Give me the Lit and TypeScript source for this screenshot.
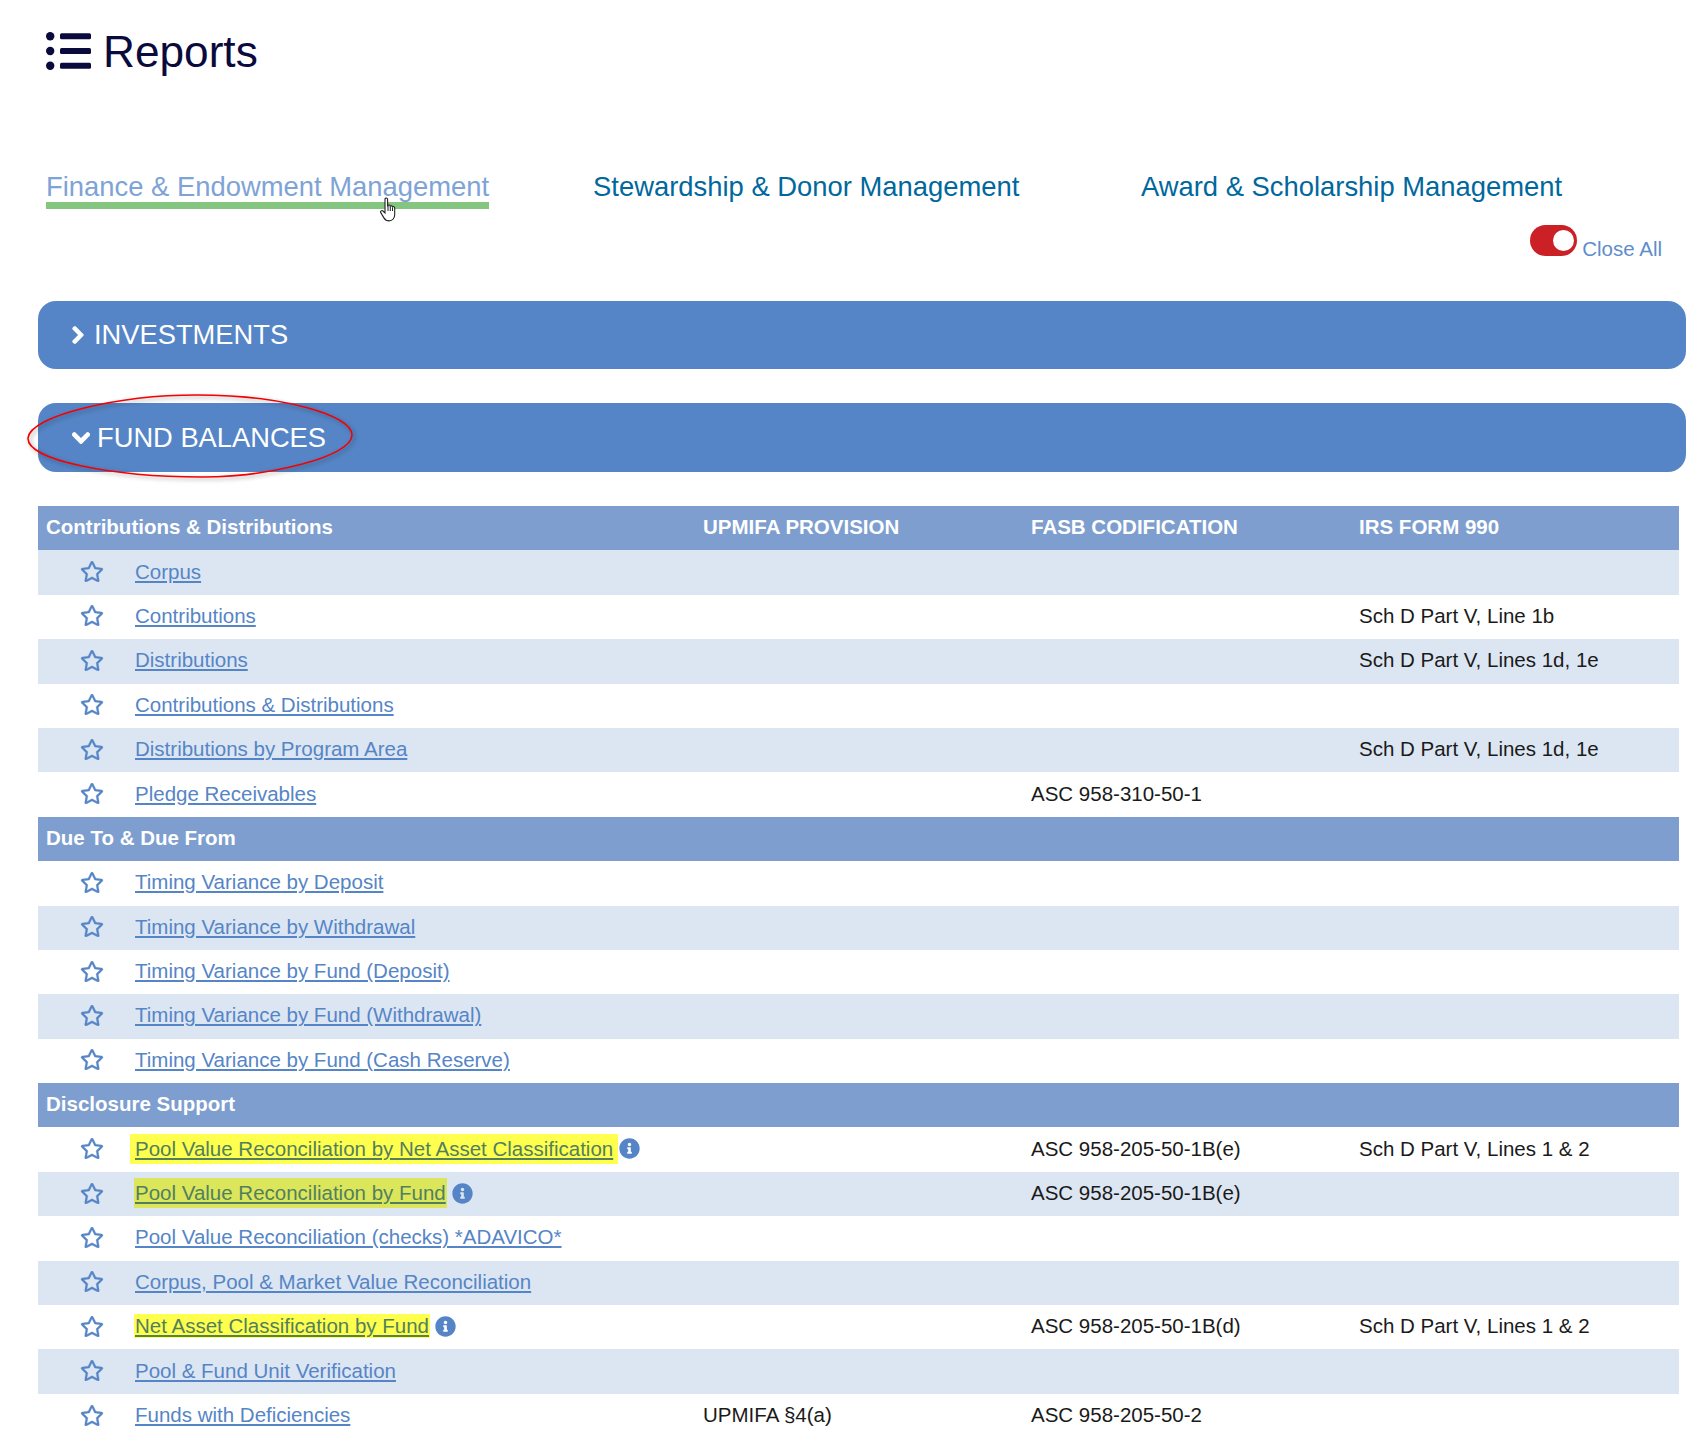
import { LitElement, html, css, svg } from "lit";
import { customElement } from "lit/decorators.js";

type Row = { kind: "head"; cells: string[] } | { kind: "row"; name: string; hl?: number; info?: boolean; a?: string; b?: string; c?: string; alt?: boolean };

const ROWS: Row[] = [
  { kind: "head", cells: ["Contributions & Distributions", "UPMIFA PROVISION", "FASB CODIFICATION", "IRS FORM 990"] },
  { kind: "row", name: "Corpus", alt: true },
  { kind: "row", name: "Contributions", c: "Sch D Part V, Line 1b" },
  { kind: "row", name: "Distributions", c: "Sch D Part V, Lines 1d, 1e", alt: true },
  { kind: "row", name: "Contributions & Distributions" },
  { kind: "row", name: "Distributions by Program Area", c: "Sch D Part V, Lines 1d, 1e", alt: true },
  { kind: "row", name: "Pledge Receivables", b: "ASC 958-310-50-1" },
  { kind: "head", cells: ["Due To & Due From", "", "", ""] },
  { kind: "row", name: "Timing Variance by Deposit" },
  { kind: "row", name: "Timing Variance by Withdrawal", alt: true },
  { kind: "row", name: "Timing Variance by Fund (Deposit)" },
  { kind: "row", name: "Timing Variance by Fund (Withdrawal)", alt: true },
  { kind: "row", name: "Timing Variance by Fund (Cash Reserve)" },
  { kind: "head", cells: ["Disclosure Support", "", "", ""] },
  { kind: "row", name: "Pool Value Reconciliation by Net Asset Classification", hl: 1, info: true, b: "ASC 958-205-50-1B(e)", c: "Sch D Part V, Lines 1 & 2" },
  { kind: "row", name: "Pool Value Reconciliation by Fund", hl: 2, info: true, b: "ASC 958-205-50-1B(e)", alt: true },
  { kind: "row", name: "Pool Value Reconciliation (checks) *ADAVICO*" },
  { kind: "row", name: "Corpus, Pool & Market Value Reconciliation", alt: true },
  { kind: "row", name: "Net Asset Classification by Fund", hl: 3, info: true, b: "ASC 958-205-50-1B(d)", c: "Sch D Part V, Lines 1 & 2" },
  { kind: "row", name: "Pool & Fund Unit Verification", alt: true },
  { kind: "row", name: "Funds with Deficiencies", a: "UPMIFA §4(a)", b: "ASC 958-205-50-2" },
];

const star = svg`<path d="M528.1 171.5L382 150.2 316.7 17.8c-11.7-23.6-45.6-23.9-57.4 0L194 150.2 47.9 171.5c-26.2 3.8-36.7 36.1-17.7 54.6l105.7 103-25 145.5c-4.5 26.3 23.2 46 46.4 33.7L288 439.6l130.7 68.7c23.2 12.2 50.9-7.4 46.4-33.7l-25-145.5 105.7-103c19-18.5 8.5-50.8-17.7-54.6zM388.6 312.3l23.7 138.4L288 385.4l-124.3 65.3 23.7-138.4-100.6-98 139-20.2 62.2-126 62.2 126 139 20.2-100.6 98z"/>`;
const info = svg`<path d="M256 8C119 8 8 119 8 256s111 248 248 248 248-111 248-248S393 8 256 8zm0 110c23.196 0 42 18.804 42 42s-18.804 42-42 42-42-18.804-42-42 18.804-42 42-42zm56 254c0 6.627-5.373 12-12 12h-88c-6.627 0-12-5.373-12-12v-24c0-6.627 5.373-12 12-12h12v-64h-12c-6.627 0-12-5.373-12-12v-24c0-6.627 5.373-12 12-12h64c6.627 0 12 5.373 12 12v100h12c6.627 0 12 5.373 12 12v24z"/>`;

@customElement("app-root")
export class AppRoot extends LitElement {
  static styles = css`
    :host {
      display: block;
      position: relative;
      width: 1686px;
      height: 1436px;
      overflow: hidden;
      background: #fff;
      font-family: "Liberation Sans", Arial, sans-serif;
      font-size: 20.5px;
      color: #1a1a1a;
    }
    .title {
      display: flex;
      align-items: center;
      gap: 12px;
      margin: 0;
      padding: 26px 0 0 46px;
      height: 52px;
      font-size: 44.2px;
      font-weight: 400;
      line-height: 52px;
      color: #0a0a3c;
    }
    .title svg { width: 45px; height: 38px; fill: #0a0a3c; margin-top: -2px; }
    .tabs {
      display: flex;
      padding: 94px 0 0 46px;
      font-size: 27.4px;
      line-height: 29px;
    }
    .tab { color: #00689d; text-decoration: none; padding-bottom: 1px; border-bottom: 7px solid transparent; }
    .tab.active { color: #7ea3d6; border-bottom-color: #84c680; }
    .tab:nth-child(2) { margin-left: 104px; }
    .tab:nth-child(3) { margin-left: 121.5px; }
    .tools {
      display: flex;
      justify-content: flex-end;
      align-items: flex-start;
      gap: 5px;
      padding: 16px 24px 0 0;
      height: 76px;
    }
    .toggle {
      position: relative;
      width: 47px;
      height: 31px;
      border-radius: 16px;
      background: #cc2027;
    }
    .toggle::after {
      content: "";
      position: absolute;
      right: 3px;
      top: 5px;
      width: 21px;
      height: 21px;
      border-radius: 50%;
      background: #fff;
    }
    .close { color: #5f8dcc; margin-top: 12px; line-height: 24px; }
    .bar {
      display: flex;
      align-items: center;
      margin-left: 38px;
      height: 68px;
      border-radius: 18px;
      background: #5585c6;
      color: #fff;
      font-size: 27.3px;
      padding-left: 34px;
    }
    .bar svg { fill: #fff; stroke: #fff; stroke-width: 36; }
    .bar.one { gap: 10px; }
    .bar.one svg { width: 12px; height: 20px; }
    .bar.two { margin-top: 34px; height: 69px; gap: 7px; }
    .bar.two svg { width: 18px; height: 20px; }
    .grid { margin: 34px 0 0 38px; width: 1641px; }
    .tr {
      display: grid;
      grid-template-columns: 657px 328px 328px 328px;
      height: 44.4px;
      padding-bottom: 2px;
      align-items: center;
      box-sizing: border-box;
    }
    .tr.head { background: #7d9ecf; color: #fff; font-weight: 700; }
    .tr.alt { background: #dce6f2; }
    .cell { padding-left: 8px; white-space: nowrap; }
    .name { display: flex; align-items: center; padding-left: 42px; }
    .star { width: 24px; height: 21px; fill: #5585c6; stroke: #5585c6; stroke-width: 8; flex: none; margin-right: 31px; }
    .name a { color: #5585c6; text-decoration: underline; }
    .hl1, .hl2, .hl3 { background: #ffff4d; }
    .alt .hl2 { background: #dbe65b; }
    .hl1 { padding: 3px 5px; margin-left: -5px; }
    .hl2 { padding: 3px 1px; margin-left: -1px; }
    .hl3 { padding: 0 1px; margin-left: -1px; }
    .hl1 a, .hl2 a, .hl3 a { color: #52805f; }
    .info { width: 21px; height: 21px; fill: #5585c6; flex: none; margin-left: 5px; }
    .hl1 + .info { margin-left: 1px; }
    .ellipse {
      position: absolute;
      left: 27px;
      top: 394px;
      width: 326px;
      height: 84px;
      overflow: visible;
      fill: none;
      stroke: #f50000;
      stroke-width: 1.6;
      filter: drop-shadow(2px 2px 2px rgba(0, 0, 0, 0.35));
    }
    .cursor { position: absolute; left: 380px; top: 197px; width: 18px; height: 26px; }
  `;

  private row(r: Row) {
    if (r.kind === "head") {
      return html`<div class="tr head">${r.cells.map((c) => html`<div class="cell">${c}</div>`)}</div>`;
    }
    const link = html`<a href="#">${r.name}</a>`;
    return html`<div class="tr ${r.alt ? "alt" : ""}">
      <div class="cell name">
        <svg class="star" viewBox="0 0 576 512">${star}</svg>
        ${r.hl ? html`<span class="hl${r.hl}">${link}</span>` : link}
        ${r.info ? html`<svg class="info" viewBox="0 0 512 512">${info}</svg>` : ""}
      </div>
      <div class="cell">${r.a ?? ""}</div>
      <div class="cell">${r.b ?? ""}</div>
      <div class="cell">${r.c ?? ""}</div>
    </div>`;
  }

  render() {
    return html`
      <h1 class="title">
        <svg viewBox="0 0 45 38">
          <circle cx="4.2" cy="4.2" r="4.2" /><circle cx="4.2" cy="19" r="4.2" /><circle cx="4.2" cy="33.8" r="4.2" />
          <rect x="14" y="1.3" width="31" height="6" rx="1.5" /><rect x="14" y="16" width="31" height="6" rx="1.5" /><rect x="14" y="30.7" width="31" height="6" rx="1.5" />
        </svg>
        <span>Reports</span>
      </h1>
      <nav class="tabs">
        <a class="tab active" href="#">Finance &amp; Endowment Management</a>
        <a class="tab" href="#">Stewardship &amp; Donor Management</a>
        <a class="tab" href="#">Award &amp; Scholarship Management</a>
      </nav>
      <div class="tools"><div class="toggle"></div><div class="close">Close All</div></div>
      <div class="bar one">
        <svg viewBox="0 0 320 512"><path d="M285.476 272.971L91.132 467.314c-9.373 9.373-24.569 9.373-33.941 0l-22.667-22.667c-9.357-9.357-9.375-24.522-.04-33.901L188.505 256 34.484 101.255c-9.335-9.379-9.317-24.544.04-33.901l22.667-22.667c9.373-9.373 24.569-9.373 33.941 0L285.475 239.03c9.373 9.372 9.373 24.568.001 33.941z"/></svg>
        <span>INVESTMENTS</span>
      </div>
      <div class="bar two">
        <svg viewBox="0 0 448 512"><path d="M207.029 381.476L12.686 187.132c-9.373-9.373-9.373-24.569 0-33.941l22.667-22.667c9.357-9.357 24.522-9.375 33.901-.04L224 284.505l154.745-154.021c9.379-9.335 24.544-9.317 33.901.04l22.667 22.667c9.373 9.373 9.373 24.569 0 33.941L240.971 381.476c-9.373 9.372-24.569 9.372-33.942 0z"/></svg>
        <span>FUND BALANCES</span>
      </div>
      <div class="grid">${ROWS.map((r) => this.row(r))}</div>
      <svg class="ellipse" viewBox="0 0 326 84"><path d="M1 44C3 22 90 1 170 1c85 0 155 20 155 40 0 22-85 42-150 42C85 83 0 66 1 44z"/></svg>
      <svg class="cursor" viewBox="0 0 18 26">
        <path d="M5 2.2c0-1.6 2.6-1.6 2.6 0v7.4l.4-1.2c.8-.8 2.2-.4 2.3.8.7-.7 2-.4 2.2.7.8-.6 2.2-.1 2.2 1.2v6.6c0 3.2-2.2 6.2-5.6 6.2-2.6 0-4-1-5.200-3L.8 15.600c-.8-1.400 1-2.800 2.200-1.600L5 16z" fill="#fff" stroke="#222" stroke-width="1.1"/>
        <path d="M8 9v5M10.300 9.500v4.500M12.500 10.500v3.500" fill="none" stroke="#222" stroke-width="1"/>
      </svg>
    `;
  }
}
